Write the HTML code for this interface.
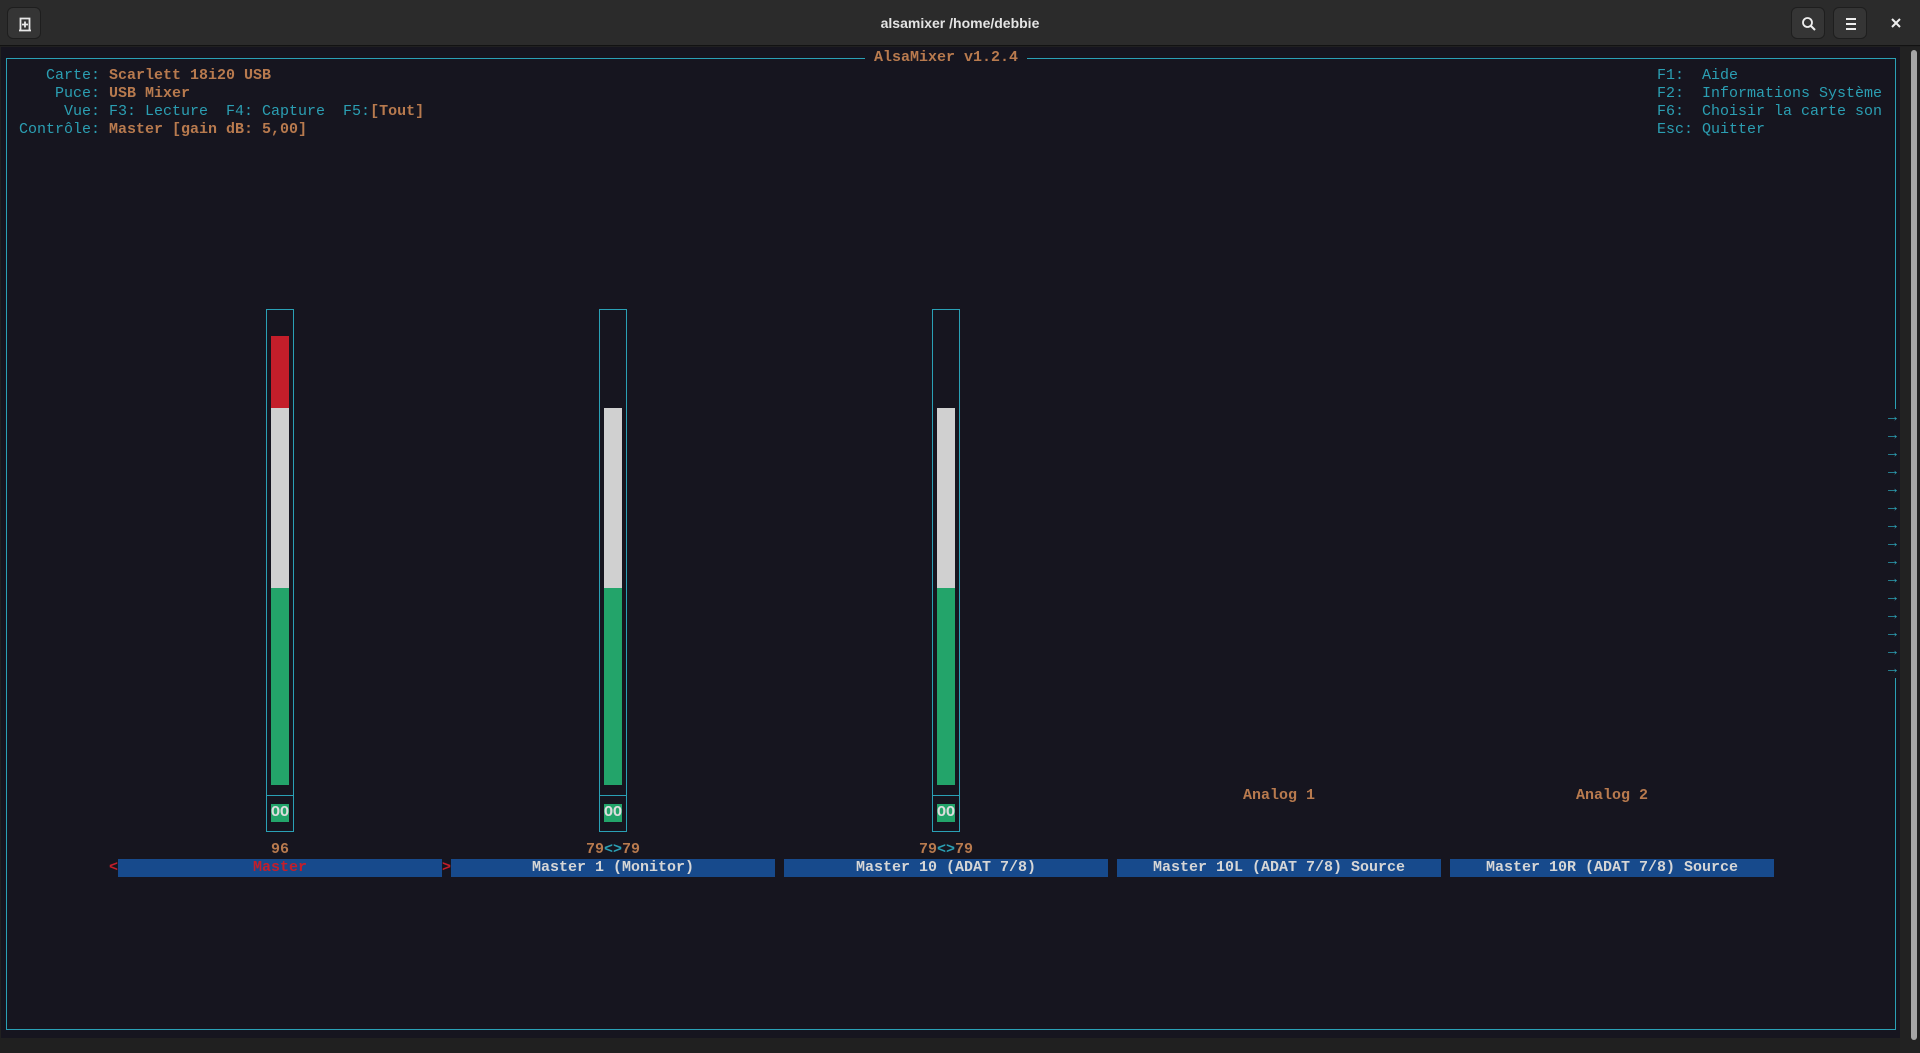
<!DOCTYPE html>
<html><head><meta charset="utf-8"><style>
*{margin:0;padding:0;box-sizing:border-box}
body{width:1920px;height:1053px;background:#202020;position:relative;overflow:hidden;font-family:"Liberation Mono",monospace}
.hdr{position:absolute;left:0;top:0;width:1920px;height:46px;background:#2b2b2b;border-bottom:1px solid #121212}
.btn{position:absolute;top:7px;width:34px;height:32px;background:#353535;border-radius:6px;border:1px solid #1e1e1e}
.title{position:absolute;left:0;width:1920px;top:15px;text-align:center;font:bold 14px "Liberation Sans",sans-serif;color:#e4e4e4}
.term{position:absolute;left:1px;top:47px;width:1899px;height:991px;background:#16151f}
.sb{position:absolute;left:1900px;top:47px;width:20px;height:1006px;background:#222}
.thumb{position:absolute;left:1911px;top:50px;width:6px;height:990px;background:#a6a6a6;border-radius:3px}
.t{position:absolute;font-size:15px;line-height:18px;height:18px;white-space:pre}
.c{color:#2b9fb3}.o{color:#b87a4e;font-weight:bold}
.ln{position:absolute;background:#2aa0b5}
.box{position:absolute;top:309px;width:28px;height:523px;border:1px solid #2aa0b5}
.lbl{position:absolute;height:18px;width:324px;background:#174a8c;color:#d6d6d6;font-weight:bold;text-align:center;font-size:15px;line-height:18px;white-space:pre}
</style></head><body>
<div class="hdr">
 <div class="btn" style="left:7px"><svg width="34" height="32" viewBox="0 0 34 32"><path d="M11 22.5h12M12.5 22.5V10.5h9v12" fill="none" stroke="#e8e8e8" stroke-width="1.8"/><path d="M17 13.5v6M14 16.5h6" stroke="#e8e8e8" stroke-width="1.8"/></svg></div>
 <div class="title">alsamixer /home/debbie</div>
 <div class="btn" style="left:1791px"><svg width="34" height="32" viewBox="0 0 34 32"><circle cx="15.5" cy="14.5" r="4.5" fill="none" stroke="#eee" stroke-width="1.8"/><path d="M19 18l4 4" stroke="#eee" stroke-width="2"/></svg></div>
 <div class="btn" style="left:1833px"><svg width="34" height="32" viewBox="0 0 34 32"><path d="M12 11h10M12 16h10M12 21h10" stroke="#eee" stroke-width="2"/></svg></div>
 <svg style="position:absolute;left:1889px;top:16px" width="14" height="14" viewBox="0 0 14 14"><path d="M3 3l8 8M11 3l-8 8" stroke="#eee" stroke-width="2"/></svg>
</div>
<div class="term"></div>
<div class="sb"></div><div class="thumb"></div>

<div class="ln" style="left:6px;top:58px;width:1890px;height:1px"></div>
<div class="ln" style="left:6px;top:1029px;width:1890px;height:1px"></div>
<div class="ln" style="left:6px;top:58px;width:1px;height:972px"></div>
<div class="ln" style="left:1895px;top:58px;width:1px;height:351px"></div>
<div class="ln" style="left:1895px;top:678px;width:1px;height:352px"></div>
<div class="t o" style="left:865px;top:49px;background:#16151f;padding:0 9px">AlsaMixer v1.2.4</div>

<div class="t c" style="left:1888px;top:409px;height:auto">→
→
→
→
→
→
→
→
→
→
→
→
→
→
→</div>

<div class="t" style="left:1px;top:67px"><span class="c">     Carte: </span><span class="o">Scarlett 18i20 USB</span></div>
<div class="t" style="left:1px;top:85px"><span class="c">      Puce: </span><span class="o">USB Mixer</span></div>
<div class="t" style="left:1px;top:103px"><span class="c">       Vue: F3: Lecture  F4: Capture  F5:</span><span class="o">[Tout]</span></div>
<div class="t" style="left:1px;top:121px"><span class="c">  Contrôle: </span><span class="o">Master [gain dB: 5,00]</span></div>
<div class="t c" style="left:1657px;top:67px">F1:  Aide</div>
<div class="t c" style="left:1657px;top:85px">F2:  Informations Système</div>
<div class="t c" style="left:1657px;top:103px">F6:  Choisir la carte son</div>
<div class="t c" style="left:1657px;top:121px">Esc: Quitter</div>

<div class="box" style="left:266px"></div>
<div class="ln" style="left:266px;top:795px;width:28px;height:1px"></div>
<div style="position:absolute;left:271px;top:336px;width:18px;height:72px;background:#c41e2a"></div>
<div style="position:absolute;left:271px;top:408px;width:18px;height:180px;background:#d0d0d0"></div>
<div style="position:absolute;left:271px;top:588px;width:18px;height:197px;background:#23a46a"></div>
<div class="t" style="left:271px;top:804px;width:18px;background:#23a46a;color:#ddd;font-weight:bold">OO</div>

<div class="box" style="left:599px"></div>
<div class="ln" style="left:599px;top:795px;width:28px;height:1px"></div>
<div style="position:absolute;left:604px;top:408px;width:18px;height:180px;background:#d0d0d0"></div>
<div style="position:absolute;left:604px;top:588px;width:18px;height:197px;background:#23a46a"></div>
<div class="t" style="left:604px;top:804px;width:18px;background:#23a46a;color:#ddd;font-weight:bold">OO</div>

<div class="box" style="left:932px"></div>
<div class="ln" style="left:932px;top:795px;width:28px;height:1px"></div>
<div style="position:absolute;left:937px;top:408px;width:18px;height:180px;background:#d0d0d0"></div>
<div style="position:absolute;left:937px;top:588px;width:18px;height:197px;background:#23a46a"></div>
<div class="t" style="left:937px;top:804px;width:18px;background:#23a46a;color:#ddd;font-weight:bold">OO</div>

<div class="t o" style="left:1243px;top:787px">Analog 1</div>
<div class="t o" style="left:1576px;top:787px">Analog 2</div>

<div class="t o" style="left:271px;top:841px">96</div>
<div class="t" style="left:586px;top:841px"><span class="o">79</span><span class="c" style="font-weight:bold">&lt;&gt;</span><span class="o">79</span></div>
<div class="t" style="left:919px;top:841px"><span class="o">79</span><span class="c" style="font-weight:bold">&lt;&gt;</span><span class="o">79</span></div>

<div class="t" style="left:109px;top:859px;color:#c41e2a;font-weight:bold">&lt;</div>
<div class="lbl" style="left:118px;top:859px;color:#c41e2a">Master</div>
<div class="t" style="left:442px;top:859px;color:#c41e2a;font-weight:bold">&gt;</div>
<div class="lbl" style="left:451px;top:859px">Master 1 (Monitor)</div>
<div class="lbl" style="left:784px;top:859px">Master 10 (ADAT 7/8)</div>
<div class="lbl" style="left:1117px;top:859px">Master 10L (ADAT 7/8) Source</div>
<div class="lbl" style="left:1450px;top:859px">Master 10R (ADAT 7/8) Source</div>
</body></html>
